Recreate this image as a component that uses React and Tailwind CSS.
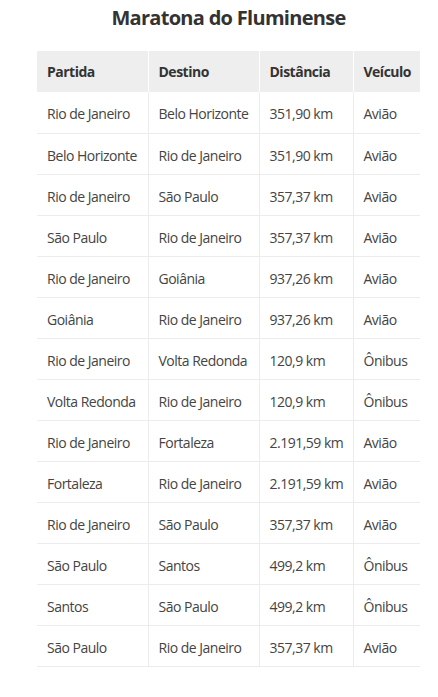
import React from "react";

const rows = [
  ["Rio de Janeiro", "Belo Horizonte", "351,90 km", "Avião"],
  ["Belo Horizonte", "Rio de Janeiro", "351,90 km", "Avião"],
  ["Rio de Janeiro", "São Paulo", "357,37 km", "Avião"],
  ["São Paulo", "Rio de Janeiro", "357,37 km", "Avião"],
  ["Rio de Janeiro", "Goiânia", "937,26 km", "Avião"],
  ["Goiânia", "Rio de Janeiro", "937,26 km", "Avião"],
  ["Rio de Janeiro", "Volta Redonda", "120,9 km", "Ônibus"],
  ["Volta Redonda", "Rio de Janeiro", "120,9 km", "Ônibus"],
  ["Rio de Janeiro", "Fortaleza", "2.191,59 km", "Avião"],
  ["Fortaleza", "Rio de Janeiro", "2.191,59 km", "Avião"],
  ["Rio de Janeiro", "São Paulo", "357,37 km", "Avião"],
  ["São Paulo", "Santos", "499,2 km", "Ônibus"],
  ["Santos", "São Paulo", "499,2 km", "Ônibus"],
  ["São Paulo", "Rio de Janeiro", "357,37 km", "Avião"],
];

const widths = ["w-[111px]", "w-[111px]", "w-[94px]", "w-[67px]"];
const headers = ["Partida", "Destino", "Distância", "Veículo"];

export default function App() {
  return (
    <div className="bg-white min-h-[697px] pl-[37px] pt-[4px] font-['Open_Sans',sans-serif]">
      <div className="w-[383px]">
        <h1 className="text-[20px] leading-[28px] font-bold text-[#333] text-center tracking-[-0.7px]">
          Maratona do Fluminense
        </h1>
        <table className="mt-[19px] w-[383px] table-fixed border-collapse">
          <thead>
            <tr className="h-[41px] bg-[#eeeeee]">
              {headers.map((h, i) => (
                <th
                  key={h}
                  className={`${widths[i]} px-[10px] text-left text-[14px] font-bold text-[#333] tracking-[-0.5px] ${
                    i < 3 ? "border-r border-white" : ""
                  }`}
                >
                  {h}
                </th>
              ))}
            </tr>
          </thead>
          <tbody>
            {rows.map((r, ri) => (
              <tr key={ri} className="h-[41px] border-b border-[#ececec]">
                {r.map((c, i) => (
                  <td
                    key={i}
                    className={`px-[10px] pt-[3px] pb-0 text-[14px] text-[#444] tracking-[-0.5px] whitespace-nowrap ${
                      i < 3 ? "border-r border-[#ececec]" : ""
                    }`}
                  >
                    {c}
                  </td>
                ))}
              </tr>
            ))}
          </tbody>
        </table>
      </div>
    </div>
  );
}
